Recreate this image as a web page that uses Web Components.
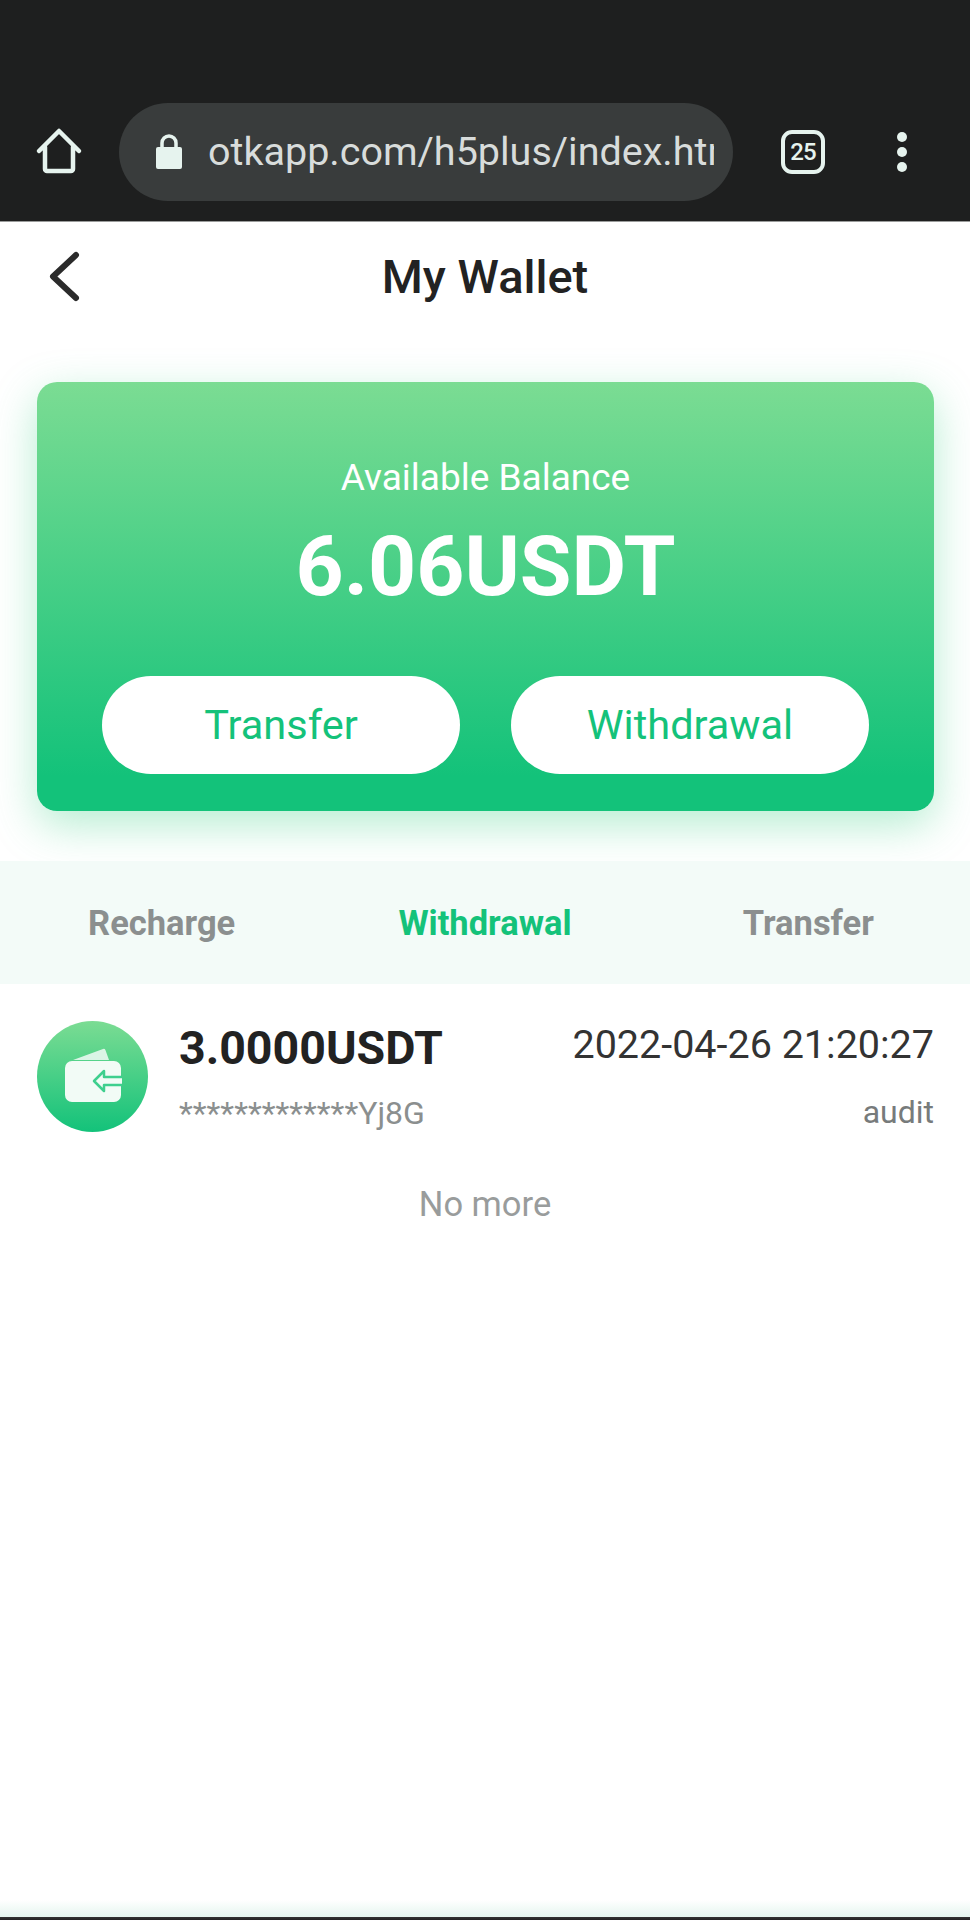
<!DOCTYPE html>
<html lang="en">
<head>
<meta charset="utf-8">
<title>My Wallet</title>
<style>
  html, body { margin: 0; background: #fff; }
  body { font-family: Roboto, "Liberation Sans", sans-serif; height: 1920px; overflow: hidden; }
  wallet-app { height: 1920px; }
</style>
</head>
<body>
<wallet-app>
  <browser-bar url="otkapp.com/h5plus/index.html" tabs="25"></browser-bar>
  <wallet-header>My Wallet</wallet-header>
  <balance-card label="Available Balance" amount="6.06USDT">
    <pill-button>Transfer</pill-button>
    <pill-button>Withdrawal</pill-button>
  </balance-card>
  <history-tabs>
    <span>Recharge</span>
    <span class="active">Withdrawal</span>
    <span>Transfer</span>
  </history-tabs>
  <record-row amount="3.0000USDT" address="*************Yj8G" date="2022-04-26 21:20:27" status="audit"></record-row>
  <list-end>No more</list-end>
</wallet-app>

<script>
/**
 * Creates a template element from a html string.
 *
 * @param {string} html - The markup of the template.
 * @returns {HTMLTemplateElement} - The template.
 */
function createTemplate (html) {
  const template = document.createElement('template')
  template.innerHTML = html
  return template
}

/**
 * Defines a custom element that only clones a template into an open shadow root.
 *
 * @param {string} name - The name of the element.
 * @param {HTMLTemplateElement} template - The template to clone.
 */
function defineStatic (name, template) {
  customElements.define(name, class extends HTMLElement {
    /**
     * Creates an instance of the current type.
     */
    constructor () {
      super()
      this.attachShadow({ mode: 'open' }).appendChild(template.content.cloneNode(true))
    }
  })
}

defineStatic('wallet-app', createTemplate(`
<style>
  :host { display: flex; flex-direction: column; position: relative; color: #222; }
  #fade { position: absolute; left: 0; right: 0; bottom: 0; height: 20px;
    background: linear-gradient(#fff, #e4f5ee 85%, #333 85%, #222); }
</style>
<slot></slot>
<div id="fade"></div>
`))

// The browser chrome above the page.
const browserBarTemplate = createTemplate(`
<style>
  :host { display: flex; align-items: center; height: 222px; padding-top: 82px; box-sizing: border-box;
    background: #1e1f1f; border-bottom: 1px solid #9a9c9b; color: #e6f3ee; }
  #home { width: 50px; height: 50px; margin-left: 34px; flex: none; }
  #address { display: flex; align-items: center; width: 614px; height: 98px; margin-left: 35px; flex: none;
    box-sizing: border-box; padding: 0 19px 0 36px; border-radius: 49px; background: #393c3c; }
  #address svg { width: 28px; height: 36px; flex: none; }
  #url { margin-left: 25px; font-size: 39.5px; color: #d8dcdb; white-space: nowrap; overflow: hidden; flex: 1; }
  #tabs { display: flex; align-items: center; justify-content: center; width: 44px; height: 44px; margin-left: 48px;
    box-sizing: border-box; border: 4px solid #e6f3ee; border-radius: 11px; font-size: 24px; font-weight: 500;
    letter-spacing: -1px; flex: none; }
  #more { display: flex; flex-direction: column; gap: 5px; margin-left: 72px; flex: none; }
  #more i { width: 10px; height: 10px; border-radius: 50%; background: #e6f3ee; }
</style>
<svg id="home" viewBox="0 0 50 50" fill="none" stroke="currentColor" stroke-width="4.500" stroke-linejoin="round" stroke-linecap="round">
  <path d="M5 24 25 4 45 24M11 20V42a2 2 0 0 0 2 2H37a2 2 0 0 0 2-2V20"/>
</svg>
<div id="address">
  <svg viewBox="0 0 28 36" fill="currentColor">
    <path d="M3 13h22a2 2 0 0 1 2 2V33a2 2 0 0 1-2 2H3a2 2 0 0 1-2-2V15a2 2 0 0 1 2-2Z"/>
    <path d="M7 14V9a7 7 0 0 1 14 0V14" fill="none" stroke="currentColor" stroke-width="3.500"/>
  </svg>
  <div id="url"></div>
</div>
<div id="tabs"></div>
<div id="more"><i></i><i></i><i></i></div>
`)

customElements.define('browser-bar',
  /**
   * Anonymous class representing a browser-bar custom element.
   */
  class extends HTMLElement {
    /**
     * Creates an instance of the current type.
     */
    constructor () {
      super()
      this.attachShadow({ mode: 'open' }).appendChild(browserBarTemplate.content.cloneNode(true))
    }

    /**
     * Called after the element is inserted into the DOM.
     */
    connectedCallback () {
      this.shadowRoot.querySelector('#url').textContent = this.getAttribute('url')
      this.shadowRoot.querySelector('#tabs').textContent = this.getAttribute('tabs')
    }
  })

defineStatic('wallet-header', createTemplate(`
<style>
  :host { display: flex; align-items: center; justify-content: center; position: relative; height: 109px;
    font-size: 47px; font-weight: 500; color: #222; }
  svg { position: absolute; left: 45px; top: 25px; width: 38px; height: 58px; }
</style>
<svg viewBox="0 0 38 58" fill="none" stroke="#2b2b2b" stroke-width="6" stroke-linecap="round" stroke-linejoin="round">
  <path d="M31 8 8 29.500 31 51"/>
</svg>
<slot></slot>
`))

const balanceCardTemplate = createTemplate(`
<style>
  :host { display: block; margin: 51px 36px 0 37px; height: 429px; box-sizing: border-box; padding-top: 74px;
    border-radius: 20px; text-align: center; color: #fff;
    background: linear-gradient(#7bdc93, #13c27a 92%);
    box-shadow: 0 14px 44px rgba(70, 210, 140, 0.4); }
  #label { font-size: 37px; line-height: 44px; }
  #amount { margin-top: 20px; font-size: 84px; line-height: 94px; font-weight: 700; }
  #actions { display: flex; justify-content: center; gap: 51px; margin-top: 62px; }
</style>
<div id="label"></div>
<div id="amount"></div>
<div id="actions"><slot></slot></div>
`)

customElements.define('balance-card',
  /**
   * Anonymous class representing a balance-card custom element.
   */
  class extends HTMLElement {
    /**
     * Creates an instance of the current type.
     */
    constructor () {
      super()
      this.attachShadow({ mode: 'open' }).appendChild(balanceCardTemplate.content.cloneNode(true))
    }

    /**
     * Called after the element is inserted into the DOM.
     */
    connectedCallback () {
      this.shadowRoot.querySelector('#label').textContent = this.getAttribute('label')
      this.shadowRoot.querySelector('#amount').textContent = this.getAttribute('amount')
    }
  })

defineStatic('pill-button', createTemplate(`
<style>
  :host { display: flex; align-items: center; justify-content: center; width: 358px; height: 98px;
    border-radius: 49px; background: #fff; color: #14c27a; font-size: 41.500px; padding-bottom: 2px; box-sizing: border-box; }
</style>
<slot></slot>
`))

defineStatic('history-tabs', createTemplate(`
<style>
  :host { display: grid; grid-template-columns: repeat(3, 1fr); align-items: center; justify-items: center;
    height: 123px; margin-top: 50px; background: #f3fbf8; font-size: 34.500px; font-weight: 700; color: #8b8f8f; }
  ::slotted(.active) { color: #14c27a; }
</style>
<slot></slot>
`))

const recordRowTemplate = createTemplate(`
<style>
  :host { display: flex; align-items: center; height: 111px; margin-top: 37px; padding: 0 36px 0 37px; }
  svg { width: 111px; height: 111px; flex: none; }
  #main, #side { display: flex; flex-direction: column; justify-content: space-between; }
  #main { margin-left: 31px; flex: 1; height: 112px; }
  #side { align-items: flex-end; height: 114px; }
  #amount { font-size: 46.500px; line-height: 54px; font-weight: 700; color: #222; }
  #address { font-size: 32px; line-height: 40px; color: #8b8f8f; }
  #date { font-size: 39.500px; line-height: 50px; color: #333; }
  #status { font-size: 32px; line-height: 44px; color: #777b7b; }
</style>
<svg viewBox="0 0 111 111">
  <defs>
    <linearGradient id="disc" x1="0" y1="0" x2="0" y2="1">
      <stop offset="0" stop-color="#7bdc93"/>
      <stop offset="1" stop-color="#13c27a"/>
    </linearGradient>
  </defs>
  <circle cx="55.500" cy="55.500" r="55.500" fill="url(#disc)"/>
  <path d="M36 39 66 28a2 2 0 0 1 2.500 1.300L72 39Z" fill="#e9f8ef" fill-opacity="0.9"/>
  <rect x="28" y="40" width="56" height="41" rx="7" fill="#f2fbf6"/>
  <path d="M85 56H67V50L57 60 67 70V64H85" fill="#f2fbf6" stroke="#3fcf8e" stroke-width="2.500" stroke-linejoin="round"/>
</svg>
<div id="main"><div id="amount"></div><div id="address"></div></div>
<div id="side"><div id="date"></div><div id="status"></div></div>
`)

customElements.define('record-row',
  /**
   * Anonymous class representing a record-row custom element.
   */
  class extends HTMLElement {
    /**
     * Creates an instance of the current type.
     */
    constructor () {
      super()
      this.attachShadow({ mode: 'open' }).appendChild(recordRowTemplate.content.cloneNode(true))
    }

    /**
     * Called after the element is inserted into the DOM.
     */
    connectedCallback () {
      for (const name of ['amount', 'address', 'date', 'status']) {
        this.shadowRoot.querySelector(`#${name}`).textContent = this.getAttribute(name)
      }
    }
  })

defineStatic('list-end', createTemplate(`
<style>
  :host { display: block; margin-top: 50px; text-align: center; font-size: 34.500px; line-height: 44px; color: #999c9c; }
</style>
<slot></slot>
`))
</script>
</body>
</html>
